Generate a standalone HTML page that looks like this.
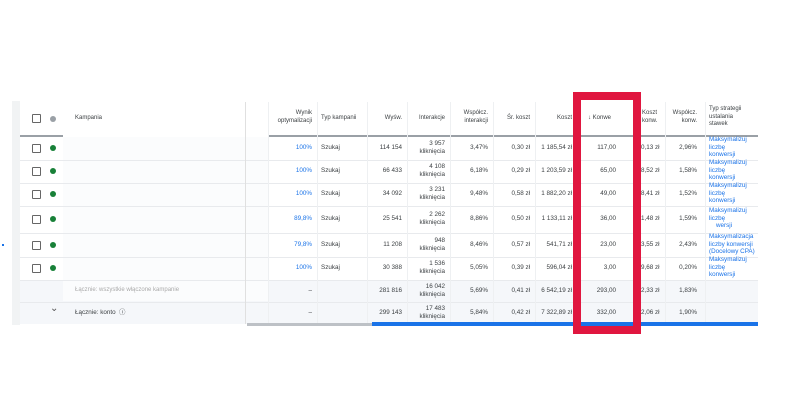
<!DOCTYPE html><html><head><meta charset="utf-8"><style>
body{margin:0;width:800px;height:400px;background:#fff;position:relative;overflow:hidden;font-family:"Liberation Sans","Noto Sans CJK JP",sans-serif;color:#3c4043}
.a{position:absolute}
.t{position:absolute;font-size:6.3px;line-height:7.5px;white-space:nowrap}
.r{text-align:right}
.h{color:#3c4043;font-size:6px}
.bl{color:#1a73e8}
.cb{position:absolute;width:7px;height:7px;border:1.3px solid #666;border-radius:1px;left:32px}
.dot{position:absolute;width:6px;height:6px;border-radius:50%;background:#188038;left:50px}
.hl{position:absolute;height:1px;background:#e8eaed;left:20px;width:738px}
.vl{position:absolute;width:1px;background:#eef0f2;top:102px;height:222px}
</style></head><body>
<div class="a" style="left:12px;top:101px;width:8px;height:224px;background:#f1f3f4"></div>
<div class="a" style="left:20px;top:280px;width:738px;height:44px;background:#f5f7fa"></div>
<div class="a" style="left:63px;top:137px;width:205px;height:164px;background:#fbfcfd"></div>
<div class="a" style="left:20px;top:135px;width:738px;height:2px;background:#9aa0a6"></div>
<div class="a" style="left:63px;top:135px;width:205px;height:2px;background:#fff"></div>
<div class="hl" style="top:160px"></div><div class="hl" style="top:183px"></div><div class="hl" style="top:206px"></div><div class="hl" style="top:233px"></div><div class="hl" style="top:257px"></div><div class="hl" style="top:280px"></div><div class="hl" style="top:302px"></div>
<div class="vl" style="left:245px;background:#e0e0e0"></div><div class="vl" style="left:268px"></div><div class="vl" style="left:317px"></div><div class="vl" style="left:367px"></div><div class="vl" style="left:407px"></div><div class="vl" style="left:450px"></div><div class="vl" style="left:493px"></div><div class="vl" style="left:535px"></div><div class="vl" style="left:665px"></div><div class="vl" style="left:705px"></div>
<div class="cb" style="top:114px"></div><div class="dot" style="top:116px;background:#9aa0a6"></div>
<div class="t h" style="left:75px;top:115px">Kampania</div>
<div class="t h r" style="right:488px;top:110px">Wynik<br>optymalizacji</div>
<div class="t h" style="left:321px;top:115px">Typ kampanii</div>
<div class="t h r" style="right:398px;top:115px">Wyśw.</div>
<div class="t h r" style="right:355px;top:115px">Interakcje</div>
<div class="t h r" style="right:312px;top:110px">Współcz.<br>interakcji</div>
<div class="t h r" style="right:270px;top:115px">Śr. koszt</div>
<div class="t h r" style="right:228px;top:115px">Koszt</div>
<div class="t h" style="left:588px;top:115px">↓ Konwe</div>
<div class="t h" style="left:642px;top:110px">Koszt<br>konw.</div>
<div class="t h r" style="right:103px;top:110px">Współcz.<br>konw.</div>
<div class="t h" style="left:709px;top:106px">Typ strategii<br>ustalania<br>stawek</div>
<div id="rows"></div>
<script>
var rows=[[148,"100%","114 154","3 957","3,47%","0,30 zł","1 185,54 zł","117,00","0,13 zł","2,96%","Maksymalizuj<br>liczbę<br>konwersji"],
[171,"100%","66 433","4 108","6,18%","0,29 zł","1 203,59 zł","65,00","8,52 zł","1,58%","Maksymalizuj<br>liczbę<br>konwersji"],
[194,"100%","34 092","3 231","9,48%","0,58 zł","1 882,20 zł","49,00","8,41 zł","1,52%","Maksymalizuj<br>liczbę<br>konwersji"],
[219,"89,8%","25 541","2 262","8,86%","0,50 zł","1 133,11 zł","36,00","1,48 zł","1,59%","Maksymalizuj<br>liczbę<br>&nbsp;&nbsp;&nbsp;&nbsp;wersji"],
[245,"79,8%","11 208","948","8,46%","0,57 zł","541,71 zł","23,00","3,55 zł","2,43%","Maksymalizacja<br>liczby konwersji<br>(Docelowy CPA)"],
[268,"100%","30 388","1 536","5,05%","0,39 zł","596,04 zł","3,00","9,68 zł","0,20%","Maksymalizuj<br>liczbę<br>konwersji"],
[291,"–","281 816","16 042","5,69%","0,41 zł","6 542,19 zł","293,00","2,33 zł","1,83%",""],
[313,"–","299 143","17 483","5,84%","0,42 zł","7 322,89 zł","332,00","2,06 zł","1,90%",""]];
var h="";rows.forEach(function(r,i){var y=r[0];
if(i<6){h+='<div class="cb" style="top:'+(y-4)+'px"></div><div class="dot" style="top:'+(y-3)+'px"></div><div class="t" style="left:321px;top:'+(y-4)+'px">Szukaj</div>';}
h+='<div class="t r '+(i<6?'bl':'')+'" style="right:488px;top:'+(y-4)+'px">'+r[1]+'</div>';
h+='<div class="t r" style="right:398px;top:'+(y-4)+'px">'+r[2]+'</div>';
h+='<div class="t r" style="right:355px;top:'+(y-8)+'px">'+r[3]+'<br>kliknięcia</div>';
h+='<div class="t r" style="right:312px;top:'+(y-4)+'px">'+r[4]+'</div>';
h+='<div class="t r" style="right:270px;top:'+(y-4)+'px">'+r[5]+'</div>';
h+='<div class="t r" style="right:228px;top:'+(y-4)+'px">'+r[6]+'</div>';
h+='<div class="t r" style="right:184px;top:'+(y-4)+'px">'+r[7]+'</div>';
h+='<div class="t" style="left:641px;top:'+(y-4)+'px">'+r[8]+'</div>';
h+='<div class="t r" style="right:103px;top:'+(y-4)+'px">'+r[9]+'</div>';
h+='<div class="t bl" style="left:709px;top:'+(y-12)+'px">'+r[10]+'</div>';});
document.getElementById("rows").innerHTML=h;
</script>
<div class="t" style="left:75px;top:287px;color:#aaa;font-size:6px">Łącznie: wszystkie włączone kampanie</div>
<div class="t" style="left:50px;top:305px;font-size:10px;color:#555">⌄</div>
<div class="t" style="left:75px;top:309px">Łącznie: konto &nbsp;ⓘ</div>
<div class="a" style="left:2px;top:244px;width:2px;height:2px;background:#1a73e8"></div>
<div class="a" style="left:247px;top:323px;width:125px;height:3px;background:#bdc1c6"></div>
<div class="a" style="left:372px;top:322px;width:386px;height:4px;background:#1a73e8"></div>
<div class="a" style="left:573px;top:92px;width:52px;height:226px;border:8px solid #e0163f"></div>
</body></html>
